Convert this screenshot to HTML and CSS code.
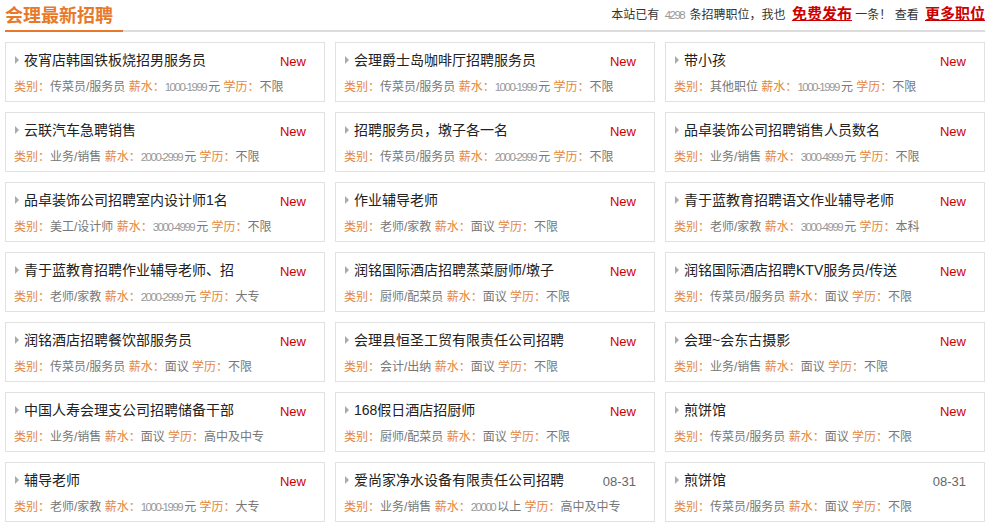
FILE: index.html
```html
<!DOCTYPE html>
<html lang="zh-CN">
<head>
	<meta charset="UTF-8">
	<title>会理最新招聘</title>
	<link rel="stylesheet" href="styles.css">
</head>
<body>
<div class="wrap">
	<div class="head">
		<h2 class="head-title">会理最新招聘</h2>
		<div class="head-info">本站已有 <span class="num">4298</span> 条招聘职位，我也 <a class="head-link" href="#">免费发布</a> 一条！ 查看 <a class="head-link" href="#">更多职位</a></div>
	</div>

	<ul class="jobs">
		<li class="job">
			<div class="job-top"><a class="job-name" href="#">夜宵店韩国铁板烧招男服务员</a><span class="job-new">New</span></div>
			<div class="job-meta"><b>类别：</b>传菜员/服务员 <b>薪水：</b><span class="num">1000-1999</span>元 <b>学历：</b>不限</div>
		</li>
		<li class="job">
			<div class="job-top"><a class="job-name" href="#">会理爵士岛咖啡厅招聘服务员</a><span class="job-new">New</span></div>
			<div class="job-meta"><b>类别：</b>传菜员/服务员 <b>薪水：</b><span class="num">1000-1999</span>元 <b>学历：</b>不限</div>
		</li>
		<li class="job">
			<div class="job-top"><a class="job-name" href="#">带小孩</a><span class="job-new">New</span></div>
			<div class="job-meta"><b>类别：</b>其他职位 <b>薪水：</b><span class="num">1000-1999</span>元 <b>学历：</b>不限</div>
		</li>

		<li class="job">
			<div class="job-top"><a class="job-name" href="#">云联汽车急聘销售</a><span class="job-new">New</span></div>
			<div class="job-meta"><b>类别：</b>业务/销售 <b>薪水：</b><span class="num">2000-2999</span>元 <b>学历：</b>不限</div>
		</li>
		<li class="job">
			<div class="job-top"><a class="job-name" href="#">招聘服务员，墩子各一名</a><span class="job-new">New</span></div>
			<div class="job-meta"><b>类别：</b>传菜员/服务员 <b>薪水：</b><span class="num">2000-2999</span>元 <b>学历：</b>不限</div>
		</li>
		<li class="job">
			<div class="job-top"><a class="job-name" href="#">品卓装饰公司招聘销售人员数名</a><span class="job-new">New</span></div>
			<div class="job-meta"><b>类别：</b>业务/销售 <b>薪水：</b><span class="num">3000-4999</span>元 <b>学历：</b>不限</div>
		</li>

		<li class="job">
			<div class="job-top"><a class="job-name" href="#">品卓装饰公司招聘室内设计师1名</a><span class="job-new">New</span></div>
			<div class="job-meta"><b>类别：</b>美工/设计师 <b>薪水：</b><span class="num">3000-4999</span>元 <b>学历：</b>不限</div>
		</li>
		<li class="job">
			<div class="job-top"><a class="job-name" href="#">作业辅导老师</a><span class="job-new">New</span></div>
			<div class="job-meta"><b>类别：</b>老师/家教 <b>薪水：</b>面议 <b>学历：</b>不限</div>
		</li>
		<li class="job">
			<div class="job-top"><a class="job-name" href="#">青于蓝教育招聘语文作业辅导老师</a><span class="job-new">New</span></div>
			<div class="job-meta"><b>类别：</b>老师/家教 <b>薪水：</b><span class="num">3000-4999</span>元 <b>学历：</b>本科</div>
		</li>

		<li class="job">
			<div class="job-top"><a class="job-name" href="#">青于蓝教育招聘作业辅导老师、招</a><span class="job-new">New</span></div>
			<div class="job-meta"><b>类别：</b>老师/家教 <b>薪水：</b><span class="num">2000-2999</span>元 <b>学历：</b>大专</div>
		</li>
		<li class="job">
			<div class="job-top"><a class="job-name" href="#">润铭国际酒店招聘蒸菜厨师/墩子</a><span class="job-new">New</span></div>
			<div class="job-meta"><b>类别：</b>厨师/配菜员 <b>薪水：</b>面议 <b>学历：</b>不限</div>
		</li>
		<li class="job">
			<div class="job-top"><a class="job-name" href="#">润铭国际酒店招聘KTV服务员/传送</a><span class="job-new">New</span></div>
			<div class="job-meta"><b>类别：</b>传菜员/服务员 <b>薪水：</b>面议 <b>学历：</b>不限</div>
		</li>

		<li class="job">
			<div class="job-top"><a class="job-name" href="#">润铭酒店招聘餐饮部服务员</a><span class="job-new">New</span></div>
			<div class="job-meta"><b>类别：</b>传菜员/服务员 <b>薪水：</b>面议 <b>学历：</b>不限</div>
		</li>
		<li class="job">
			<div class="job-top"><a class="job-name" href="#">会理县恒圣工贸有限责任公司招聘</a><span class="job-new">New</span></div>
			<div class="job-meta"><b>类别：</b>会计/出纳 <b>薪水：</b>面议 <b>学历：</b>不限</div>
		</li>
		<li class="job">
			<div class="job-top"><a class="job-name" href="#">会理~会东古摄影</a><span class="job-new">New</span></div>
			<div class="job-meta"><b>类别：</b>业务/销售 <b>薪水：</b>面议 <b>学历：</b>不限</div>
		</li>

		<li class="job">
			<div class="job-top"><a class="job-name" href="#">中国人寿会理支公司招聘储备干部</a><span class="job-new">New</span></div>
			<div class="job-meta"><b>类别：</b>业务/销售 <b>薪水：</b>面议 <b>学历：</b>高中及中专</div>
		</li>
		<li class="job">
			<div class="job-top"><a class="job-name" href="#">168假日酒店招厨师</a><span class="job-new">New</span></div>
			<div class="job-meta"><b>类别：</b>厨师/配菜员 <b>薪水：</b>面议 <b>学历：</b>不限</div>
		</li>
		<li class="job">
			<div class="job-top"><a class="job-name" href="#">煎饼馆</a><span class="job-new">New</span></div>
			<div class="job-meta"><b>类别：</b>传菜员/服务员 <b>薪水：</b>面议 <b>学历：</b>不限</div>
		</li>

		<li class="job">
			<div class="job-top"><a class="job-name" href="#">辅导老师</a><span class="job-new">New</span></div>
			<div class="job-meta"><b>类别：</b>老师/家教 <b>薪水：</b><span class="num">1000-1999</span>元 <b>学历：</b>大专</div>
		</li>
		<li class="job">
			<div class="job-top"><a class="job-name" href="#">爱尚家净水设备有限责任公司招聘</a><span class="job-date">08-31</span></div>
			<div class="job-meta"><b>类别：</b>业务/销售 <b>薪水：</b><span class="num">20000</span>以上 <b>学历：</b>高中及中专</div>
		</li>
		<li class="job">
			<div class="job-top"><a class="job-name" href="#">煎饼馆</a><span class="job-date">08-31</span></div>
			<div class="job-meta"><b>类别：</b>传菜员/服务员 <b>薪水：</b>面议 <b>学历：</b>不限</div>
		</li>
	</ul>
</div>
</body>
</html>
```

FILE: styles.css
```css
body {
	margin: 0;
	background: #fff;
	font-family: "Liberation Sans", "Noto Sans CJK SC", sans-serif;
	font-size: 12px;
	color: #333;
}

.wrap {
	padding: 0 3px 0 5px;
}

/* header strip */
.head {
	display: flex;
	justify-content: space-between;
	height: 30px;
	border-bottom: 2px solid #dcdcdc;
}

.head-title {
	display: flex;
	align-items: center;
	width: 118px;
	margin: 0 0 -2px 0;
	padding-bottom: 3px;
	border-bottom: 2px solid #e8792a;
	font-size: 18px;
	font-weight: bold;
	color: #e8792a;
}

.head-info {
	line-height: 27px;
	color: #333;
	white-space: nowrap;
}

.head-info .num {
	margin: 0 2px;
}

.head-link {
	margin-left: 3px;
	font-size: 15px;
	font-weight: bold;
	color: #cc0000;
	text-decoration: underline;
}

/* narrow grey numbers */
.num {
	font-family: "Liberation Sans", sans-serif;
	font-size: 11.5px;
	letter-spacing: -1.5px;
	color: #999;
}

/* job cards */
.jobs {
	display: grid;
	grid-template-columns: repeat(3, 320px);
	gap: 10px;
	margin: 10px 0 0 0;
	padding: 0;
	list-style: none;
}

.job {
	box-sizing: border-box;
	height: 60px;
	padding: 7px 18px 0 8px;
	border: 1px solid #e2e2e2;
}

.job-top {
	display: flex;
	align-items: center;
	height: 20px;
	line-height: 20px;
}

.job-top::before {
	content: "";
	width: 0;
	height: 0;
	margin: 0 5px 0 1px;
	border-top: 4px solid transparent;
	border-bottom: 4px solid transparent;
	border-left: 4px solid #aaa;
}

.job-name {
	flex: 1;
	font-size: 14px;
	color: #222;
	text-decoration: none;
}

.job-new {
	padding-top: 3px;
	font-size: 13px;
	color: #cc0000;
}

.job-date {
	padding-top: 3px;
	font-size: 13px;
	color: #666;
}

.job-meta {
	margin-top: 7px;
	line-height: 20px;
	color: #777;
	white-space: nowrap;
}

.job-meta b {
	font-weight: normal;
	color: #e3873c;
}

.job-meta .num {
	margin-right: 2px;
}
```
